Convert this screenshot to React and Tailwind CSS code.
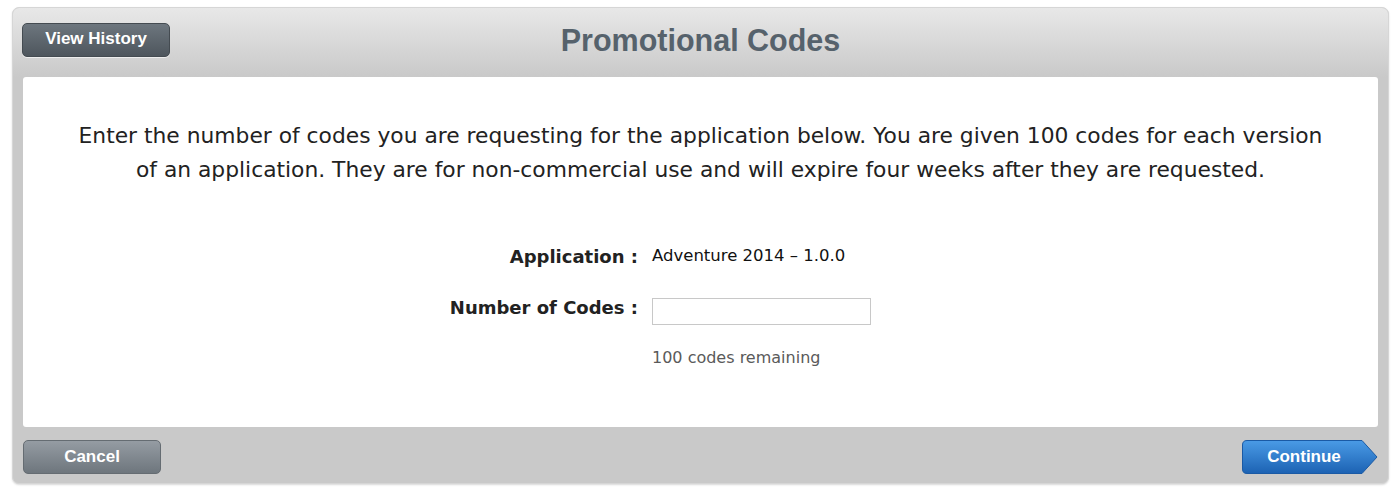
export default function App() {
  const helv = { fontFamily: '"Liberation Sans", Arial, sans-serif' };
  return (
    <div className="w-[1400px] h-[494px] bg-white pt-[7px] pl-[12px]" style={{ fontFamily: '"DejaVu Sans", "Lucida Grande", sans-serif' }}>
      <div className="w-[1377px] h-[477px] rounded-[7px] bg-[#c9c9c9] border border-[#d6d6d6] shadow-[0_1px_2px_rgba(0,0,0,0.15)] flex flex-col overflow-hidden">
        <div className="h-[69px] bg-gradient-to-b from-[#e8e8e8] to-[#c9c9c9] relative flex items-center justify-center shrink-0">
          <button
            className="absolute left-[9px] top-[15px] w-[148px] h-[34px] rounded-[5px] bg-gradient-to-b from-[#6d767e] to-[#4e565d] border border-[#444b51] text-white text-[17px] font-bold shadow-[0_1px_0_rgba(255,255,255,0.6)] flex items-center justify-center pb-[2px]"
            style={helv}
          >
            View History
          </button>
          <h1 className="text-[30.5px] font-bold text-[#56626c] mb-[3px]" style={helv}>
            Promotional Codes
          </h1>
        </div>
        <div className="mx-[10px] h-[350px] bg-white rounded-[3px] shrink-0 flex flex-col items-center">
          <p className="mt-[42px] text-[21.8px] leading-[34px] text-[#222] text-center whitespace-nowrap">
            Enter the number of codes you are requesting for the application below. You are given 100 codes for each version
            <br />
            of an application. They are for non-commercial use and will expire four weeks after they are requested.
          </p>
          <div className="mt-[58px] grid grid-cols-[615px_1fr] gap-x-[14px] w-full">
            <div className="text-right text-[18px] font-bold text-[#222] leading-[24px]">Application :</div>
            <div className="text-[16.5px] text-[#111] leading-[22px]">Adventure 2014 – 1.0.0</div>
            <div className="text-right text-[18px] font-bold text-[#222] leading-[24px] mt-[27px]">Number of Codes :</div>
            <div className="mt-[29px]">
              <input className="w-[219px] h-[27px] border border-[#c8c8c8] bg-white outline-none" />
            </div>
            <div></div>
            <div className="mt-[21px] text-[16px] text-[#5a5a5a]">100 codes remaining</div>
          </div>
        </div>
        <div className="flex-1 flex items-start justify-between pt-[13px] pl-[10px] pr-[10px]">
          <button
            className="w-[138px] h-[34px] rounded-[5px] bg-gradient-to-b from-[#959ca3] to-[#6e767d] border border-[#656c72] text-white text-[17px] font-bold flex items-center justify-center pb-[1px]"
            style={helv}
          >
            Cancel
          </button>
          <div className="relative w-[136px] h-[34px]">
            <svg className="absolute inset-0" width="136" height="34" viewBox="0 0 136 34">
              <defs>
                <linearGradient id="cg" x1="0" y1="0" x2="0" y2="1">
                  <stop offset="0" stopColor="#4a9be6" />
                  <stop offset="1" stopColor="#1c62b3" />
                </linearGradient>
              </defs>
              <path d="M5 0.5 H120 L135 17 L120 33.5 H5 Q0.5 33.5 0.5 29 V5 Q0.5 0.5 5 0.5 Z" fill="url(#cg)" stroke="#1a5aa5" strokeWidth="1" />
            </svg>
            <span className="absolute inset-0 pr-[12px] flex items-center justify-center text-white text-[17px] font-bold pb-[1px]" style={helv}>
              Continue
            </span>
          </div>
        </div>
      </div>
    </div>
  );
}
